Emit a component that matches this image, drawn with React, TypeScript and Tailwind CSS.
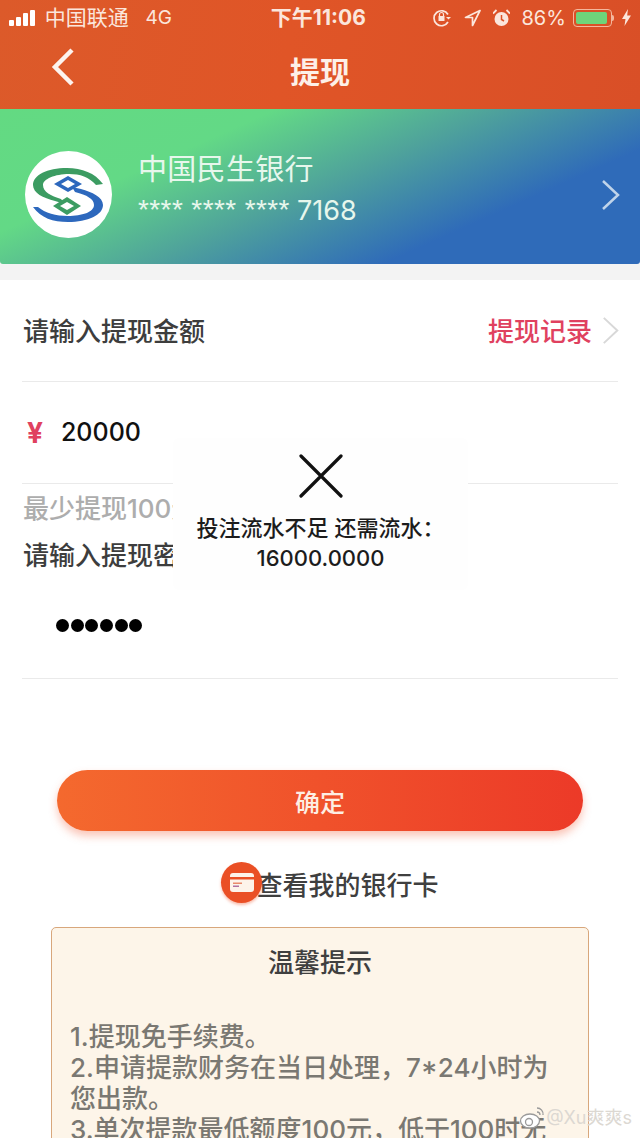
const FONT = "font-['Inter','Noto_Sans_CJK_SC',sans-serif]";

function Chevron({ className, color, w = 20, h = 32, sw = 2.5 }: { className?: string; color: string; w?: number; h?: number; sw?: number }) {
  return (
    <svg className={className} width={w} height={h} viewBox="0 0 20 32" fill="none" stroke={color} strokeWidth={sw}>
      <path d="M2 2 17 16 2 30" />
    </svg>
  );
}

function StatusBar() {
  return (
    <div className="flex h-[35px] items-center pl-[9px] pr-[9px] text-[19px] leading-none text-[#fbe6dc]">
      <div className="flex w-[31px] items-end gap-[2px]">
        <span className="h-[6px] w-[5px] rounded-[1px] bg-white" />
        <span className="h-[9px] w-[5px] rounded-[1px] bg-white" />
        <span className="h-[13px] w-[5px] rounded-[1px] bg-white" />
        <span className="h-[16px] w-[5px] rounded-[1px] bg-white" />
      </div>
      <span className="ml-[5px] w-[101px] text-[21px]">中国联通</span>
      <span className="text-[19px]">4G</span>
      <span className="ml-[99px] w-[100px] whitespace-nowrap text-[21px] font-bold">下午11:06</span>
      <div className="ml-[62px] flex items-center">
        <svg width="19" height="20" viewBox="0 0 19 20" fill="none" stroke="#fbe6dc" strokeWidth="1.7">
          <path d="M16 6.500A7.500 7.500 0 1 0 16 14" />
          <rect x="6.500" y="8" width="6" height="5" fill="#fbe6dc" stroke="none" />
          <path d="M7.500 8V6.500a2 2 0 0 1 4 0V8" strokeWidth="1.2" />
          <path d="M14 9l2.500 2.500L19 9" fill="#fbe6dc" stroke="none" />
        </svg>
        <svg className="ml-[13px]" width="17" height="18" viewBox="0 0 17 18" fill="none" stroke="#fbe6dc" strokeWidth="1.7" strokeLinejoin="round">
          <path d="M16 1.500 1.500 8.500H8.500V16.500Z" />
        </svg>
        <svg className="ml-[12px]" width="17" height="18" viewBox="0 0 17 18" fill="#fbe6dc">
          <circle cx="8.500" cy="10" r="7" />
          <path d="M8.500 6v4.500l2.500 1.500" stroke="#dd5327" strokeWidth="1.500" fill="none" />
          <path d="M0 4.500 3.500 1M17 4.500 13.500 1" stroke="#fbe6dc" strokeWidth="1.800" />
        </svg>
      </div>
      <span className="ml-[11px] w-[52px] whitespace-nowrap text-[20px]">86%</span>
      <div className="flex h-[18px] w-[39px] items-center rounded-[4px] border border-[#f4b79d] p-[2px]">
        <div className="h-full w-[31px] rounded-[2px] bg-[#6ed47a]" />
      </div>
      <span className="h-[6px] w-[2px] rounded-r-full bg-[#f4b79d]" />
      <svg className="ml-[8px]" width="9" height="17" viewBox="0 0 9 17" fill="#fbe6dc">
        <path d="M6 0 0 10h3.500L2.500 17 9 6.500H5.200Z" />
      </svg>
    </div>
  );
}

function NavBar() {
  return (
    <div className="relative flex h-[74px] items-center justify-center pb-[1px]">
      <svg className="absolute left-[51px] top-[12px]" width="25" height="40" viewBox="0 0 25 40" fill="none" stroke="#fdf3ee" strokeWidth="4.500">
        <path d="M21 3 4 20l17 17" />
      </svg>
      <span className="text-[30px] font-bold leading-none text-[#fdf0e8]">提现</span>
    </div>
  );
}

function BankLogo() {
  return (
    <svg className="mt-[15px] shrink-0" width="87" height="87" viewBox="0 0 87 87">
      <circle cx="43.500" cy="43.500" r="43.500" fill="#fff" />
      <path d="M78 33C70 22 57 17 42 17 22 17 8 24 8 34c0 8 10 13 22 16l10 3-4-5c-10-3-18-7-18-14 0-6 12-11 26-11 11 0 20 3 27 11Z" fill="#3c9c62" />
      <path d="M8 56c8 11 20 15 35 15 20 0 35-7 35-17 0-8-11-13-22-16l-9-2 3 5c12 3 19 7 19 13 0 7-12 11-26 11-12 0-23-3-30-9Z" fill="#2d68bd" />
      <path d="M43 25 57 33 43 41 29 33Z" fill="#2d68bd" />
      <path d="M43 29 50 33 43 37 36 33Z" fill="#fff" />
      <path d="M42 46 56 55 42 64 28 55Z" fill="#3c9c62" />
      <path d="M42 51 49 55 42 59 35 55Z" fill="#fff" />
    </svg>
  );
}

function BankCard() {
  return (
    <div className="flex h-[155px] items-center rounded-b-[3px] bg-[linear-gradient(156deg,#63da82_0%,#63d986_28%,#4fa39b_50%,#2f6bb9_74%)] pl-[25px] pr-[19px]">
      <BankLogo />
      <div className="ml-[26px] flex-1 pt-[5px]">
        <div className="text-[29px] leading-[34px] tracking-[0.3px] text-[#e7f7ec]">中国民生银行</div>
        <div className="mt-[8px] flex items-center text-[#e7f7ec]">
          <span className="whitespace-nowrap font-['Liberation_Sans'] text-[28px] leading-[28px] tracking-[0.4px]">**** **** ****</span>
          <span className="ml-[7px] mt-[2px] text-[27px] leading-[28px]">7168</span>
        </div>
      </div>
      <Chevron className="mt-[16px]" color="#c0d4ea" />
    </div>
  );
}

function Row({ h, children }: { h: string; children: React.ReactNode }) {
  return <div className={`flex items-center border-b border-[#eaeaea] ${h}`}>{children}</div>;
}

function Form() {
  return (
    <div className="mt-[16px] bg-white font-medium">
      <div className="mx-[22px]">
        <Row h="h-[102px]">
          <span className="flex-1 pl-[1px] pt-[1px] text-[26px] text-[#3d3d3d]">请输入提现金额</span>
          <span className="pt-[1px] text-[26px] text-[#e0415f]">提现记录</span>
          <Chevron className="-mr-[2px] ml-[10px]" color="#d8d8d8" w={18} h={29} sw={2.2} />
        </Row>
        <Row h="h-[102px]">
          <span className="ml-[5px] text-[28px] font-bold text-[#e0415f]">¥</span>
          <span className="ml-[18px] pt-[1px] text-[25px] text-[#111]">20000</span>
        </Row>
        <div className="pl-[1px] pt-[9px] text-[26px] leading-[32px] text-[#adadad]">最少提现100元</div>
        <div className="mt-[15px] pl-[1px] text-[26px] leading-[32px] text-[#3d3d3d]">请输入提现密码</div>
        <div className="flex h-[107px] items-center gap-[1.700px] border-b border-[#eaeaea] pt-[1px] pl-[34px]">
          {[0, 1, 2, 3, 4, 5].map((i) => (
            <span key={i} className="h-[13px] w-[13px] rounded-full bg-black" />
          ))}
        </div>
      </div>
      <div className="mx-[57px] mt-[91px] flex h-[61px] items-center justify-center rounded-full bg-[linear-gradient(90deg,#f4692e,#ec3a28)] pt-[6px] text-[25px] text-[#fdeee4] shadow-[0_5px_8px_rgba(240,90,50,0.35)]">
        确定
      </div>
      <div className="mt-[31px] flex h-[46px] items-center justify-center pl-[20px]">
        <div className="z-10 -mt-[6px] flex h-[41px] w-[41px] items-center justify-center rounded-full bg-[#ea4f25] shadow-[0_2px_3px_rgba(240,90,50,0.4)]">
          <svg width="24" height="19" viewBox="0 0 24 19">
            <rect width="24" height="19" rx="3" fill="#fdf3ea" />
            <rect y="4" width="24" height="2.500" fill="#ea4f25" />
            <rect x="3" y="9.500" width="9" height="1.500" fill="#e98a6b" />
            <rect x="3" y="12.500" width="6" height="1.500" fill="#b070a0" />
          </svg>
        </div>
        <span className="-ml-[6px] text-[26px] text-[#3f3f3f]">查看我的银行卡</span>
      </div>
      <Notice />
    </div>
  );
}

function Notice() {
  return (
    <div className="mx-[51px] mt-[19px] h-[260px] rounded-[5px] border border-[#d8a77c] bg-[#fdf5e9] pl-[18px] pr-[30px] pt-[17px]">
      <div className="pl-[12px] text-center text-[26px] leading-[36px] text-[#3f3f3f]">温馨提示</div>
      <div className="mt-[40px] text-[26px] leading-[31px] text-[#7a7872]">
        <div>1.提现免手续费。</div>
        <div>2.申请提款财务在当日处理，7*24小时为您出款。</div>
        <div>3.单次提款最低额度100元，低于100时无法提现。</div>
      </div>
    </div>
  );
}

function Toast() {
  return (
    <div className="absolute left-[173px] top-[438px] flex h-[152px] w-[295px] flex-col items-center rounded-[6px] bg-[#fefefe] pt-[16px] font-medium">
      <svg width="44" height="44" viewBox="0 0 44 44" stroke="#111" strokeWidth="3.200" strokeLinecap="round">
        <path d="M2 2 42 42M42 2 2 42" />
      </svg>
      <div className="mt-[15px] whitespace-nowrap text-center text-[22px] leading-[30px] text-[#1c1c1c]">
        投注流水不足 还需流水：
        <br />
        <span className="text-[22px]">16000.0000</span>
      </div>
    </div>
  );
}

function Watermark() {
  return (
    <div className="absolute bottom-[8px] right-[8px] flex items-center text-[18px] leading-none text-[#dcd8d2]">
      <svg width="26" height="24" viewBox="0 0 26 24" fill="none" stroke="#9a9a9a" strokeWidth="1.300">
        <ellipse cx="11" cy="15" rx="9.500" ry="7" fill="#fff" />
        <circle cx="10" cy="16" r="3.500" />
        <path d="M18 2a6 6 0 0 1 6 7M18 6a3 3 0 0 1 3 3" />
      </svg>
      <span className="ml-[1px]">@Xu爽爽s</span>
    </div>
  );
}

export default function App() {
  return (
    <div className={`relative h-[1138px] w-[640px] overflow-hidden bg-white ${FONT}`}>
      <div className="h-[109px] bg-[linear-gradient(100deg,#dc5a2a,#e05527_45%,#d94f27)]">
        <StatusBar />
        <NavBar />
      </div>
      <div className="bg-[#f3f3f3]">
        <BankCard />
        <Form />
      </div>
      <Toast />
      <Watermark />
    </div>
  );
}
